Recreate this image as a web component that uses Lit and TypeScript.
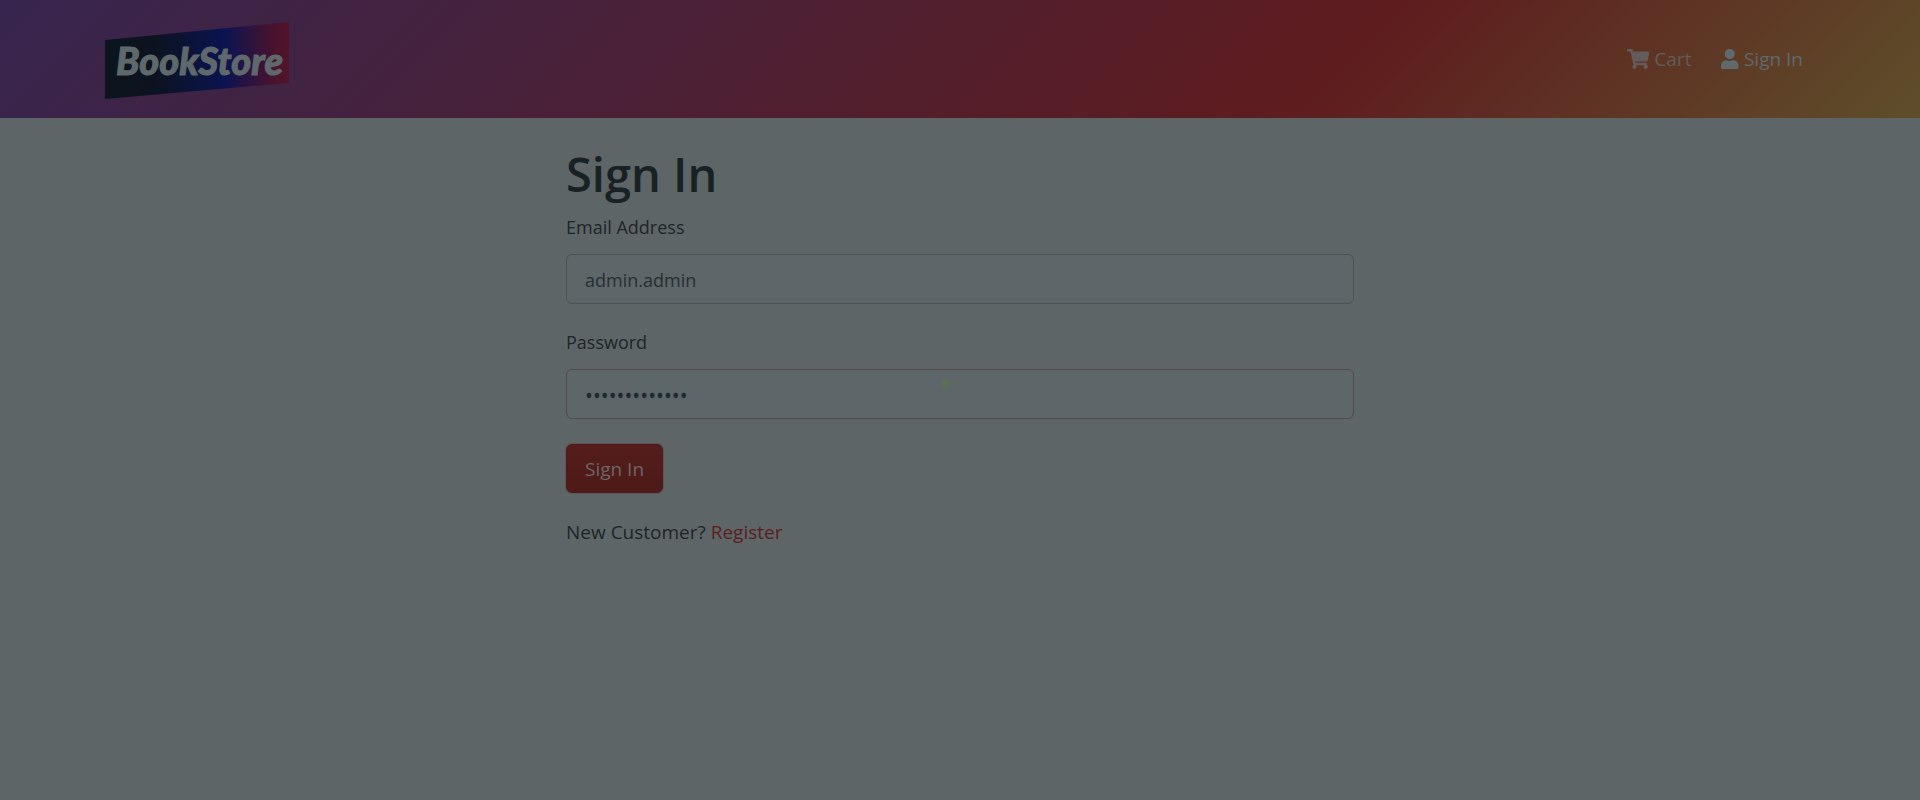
import { LitElement, html, css } from "lit";
import { customElement } from "lit/decorators.js";

@customElement("store-header")
class StoreHeader extends LitElement {
  static styles = css`
    :host {
      display: block;
      background: linear-gradient(135deg, #37254f 0%, #5e1c1e 69%, #5e4e2a 100%);
    }
    .bar {
      box-sizing: border-box;
      width: 90%;
      max-width: 1710px;
      min-height: 118px;
      margin: 0 auto;
      display: flex;
      align-items: center;
      justify-content: space-between;
    }
    .brand {
      display: block;
      padding-top: 3px;
    }
    .logo {
      display: block;
    }
    .word {
      font: italic 900 38px Lato, "Open Sans", sans-serif;
      fill: #5f696b;
      stroke: #5f696b;
      stroke-width: 1;
    }
    .links {
      display: flex;
      gap: 30px;
      padding: 0 12px;
    }
    .link {
      display: flex;
      align-items: center;
      gap: 5px;
      color: #635c5a;
      font-size: 19px;
      line-height: 30px;
      text-decoration: none;
    }
    .active {
      color: #5f6a6c;
    }
    .icon {
      height: 20px;
      fill: currentColor;
    }
  `;

  render() {
    return html`
      <header class="bar">
        <a class="brand" href="#" aria-label="BookStore">
          <svg class="logo" width="184" height="77" viewBox="0 0 184 77">
            <defs>
              <linearGradient id="panel">
                <stop offset="0" stop-color="#0c141d" />
                <stop offset="0.27" stop-color="#0c131f" />
                <stop offset="0.65" stop-color="#0b1352" />
                <stop offset="0.93" stop-color="#4c132c" />
                <stop offset="1" stop-color="#52142c" />
              </linearGradient>
            </defs>
            <polygon points="0,18 184,0 184,61 0,77" fill="url(#panel)" />
            <text class="word" x="11" y="53">BookStore</text>
          </svg>
        </a>
        <nav class="links">
          <a class="link" href="#cart">
            <svg class="icon" viewBox="0 0 576 512" aria-hidden="true">
              <path d="M528.12 301.319l47.273-208C578.806 78.301 567.391 64 551.99 64H159.208l-9.166-44.81C147.758 8.021 137.93 0 126.529 0H24C10.745 0 0 10.745 0 24v16c0 13.255 10.745 24 24 24h69.883l70.248 343.435C147.325 417.1 136 435.222 136 456c0 30.928 25.072 56 56 56s56-25.072 56-56c0-15.674-6.447-29.835-16.824-40h209.647C430.447 426.165 424 440.326 424 456c0 30.928 25.072 56 56 56s56-25.072 56-56c0-22.172-12.888-41.332-31.579-50.405l5.517-24.276c3.413-15.018-8.002-29.319-23.403-29.319H218.117l-6.545-32h293.145c11.206 0 20.92-7.754 23.403-18.681z" />
            </svg>
            <span>Cart</span>
          </a>
          <a class="link active" href="#signin">
            <svg class="icon" viewBox="0 0 448 512" aria-hidden="true">
              <path d="M224 256c70.7 0 128-57.3 128-128S294.7 0 224 0 96 57.3 96 128s57.3 128 128 128zm89.6 32h-16.7c-22.2 10.2-46.9 16-72.9 16s-50.6-5.8-72.9-16h-16.7C60.2 288 0 348.2 0 422.4V464c0 26.5 21.5 48 48 48h352c26.5 0 48-21.5 48-48v-41.6c0-74.2-60.2-134.4-134.4-134.4z" />
            </svg>
            <span>Sign In</span>
          </a>
        </nav>
      </header>
    `;
  }
}

@customElement("sign-in-form")
class SignInForm extends LitElement {
  static styles = css`
    :host {
      display: block;
      box-sizing: border-box;
      width: 90%;
      max-width: 788px;
      margin: 0 auto;
      padding: 26px 0;
    }
    .title {
      margin: 0 0 10px;
      color: #182123;
      font-size: 47px;
      font-weight: 600;
      line-height: 60px;
    }
    .form {
      display: grid;
      justify-items: start;
      gap: 25px;
    }
    .field {
      position: relative;
      width: 100%;
      font-size: 18px;
    }
    .label {
      display: block;
      margin-bottom: 14px;
      line-height: 26px;
    }
    .input {
      display: block;
      box-sizing: border-box;
      width: 100%;
      height: 50px;
      padding: 2px 18px 0;
      border: 1px solid #4a5456;
      border-radius: 6px;
      outline: none;
      background: #5d6668;
      color: #272f32;
      font: inherit;
    }
    .secret {
      border-color: #54494c;
      color: #20292b;
      font-size: 21px;
    }
    .cursor {
      position: absolute;
      top: 50px;
      left: calc(50% - 19px);
      width: 9px;
      height: 9px;
      border-radius: 50%;
      background: #5a6f57;
      pointer-events: none;
    }
    .submit {
      height: 49px;
      padding: 0 18px;
      border: 1px solid #4c1a18;
      border-radius: 6px;
      background: linear-gradient(#541d1b, #4d1a18);
      box-shadow: 0 0 0 1px #5e5557;
      color: #6b6667;
      font: inherit;
    }
    .note {
      margin: 24px 0 0;
    }
    .register {
      color: #591f20;
      text-decoration: none;
    }
  `;

  render() {
    return html`
      <h1 class="title">Sign In</h1>
      <form class="form" @submit=${(e: Event) => e.preventDefault()}>
        <div class="field">
          <label class="label" for="email">Email Address</label>
          <input class="input" id="email" type="text" value="admin.admin" />
        </div>
        <div class="field">
          <label class="label" for="password">Password</label>
          <input class="input secret" id="password" type="password" value="administrator" />
          <span class="cursor"></span>
        </div>
        <button class="submit" type="submit">Sign In</button>
      </form>
      <p class="note">New Customer? <a class="register" href="#register">Register</a></p>
    `;
  }
}

@customElement("app-root")
class AppRoot extends LitElement {
  static styles = css`
    :host {
      display: block;
      min-height: 100vh;
      background: #5d6567;
      color: #1d2528;
      font-family: "Open Sans", "Noto Sans", sans-serif;
      font-size: 19px;
      line-height: 30px;
    }
  `;

  render() {
    return html`
      <store-header></store-header>
      <main><sign-in-form></sign-in-form></main>
    `;
  }
}
